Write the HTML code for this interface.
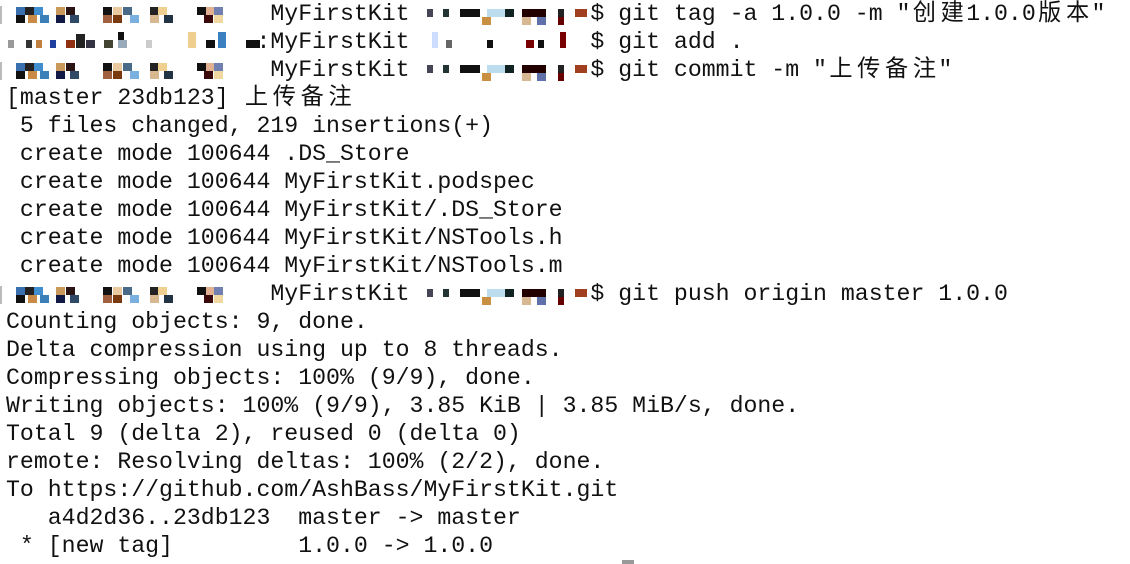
<!DOCTYPE html>
<html><head><meta charset="utf-8"><style>
body{margin:0;background:#fff;width:1130px;height:564px;overflow:hidden;position:relative}
pre{position:absolute;left:6px;top:0;margin:0;font-family:"Liberation Mono","Noto Sans CJK SC",monospace;font-size:23.2px;line-height:28px;color:#111}
pre b{font-weight:normal;display:inline-block;width:27.86px;text-align:center}
.p{position:absolute;left:0;width:600px;height:28px}
.p i{position:absolute;display:block;height:8px;width:9px}
.bar{position:absolute;left:0;width:2px;height:18px;background:#bbb}
</style></head><body>
<pre>                   MyFirstKit             $ git tag -a 1.0.0 -m "<b>创</b><b>建</b>1.0.0<b>版</b><b>本</b>"
                  :MyFirstKit             $ git add .
                   MyFirstKit             $ git commit -m "<b>上</b><b>传</b><b>备</b><b>注</b>"
[master 23db123] <b>上</b><b>传</b><b>备</b><b>注</b>
 5 files changed, 219 insertions(+)
 create mode 100644 .DS_Store
 create mode 100644 MyFirstKit.podspec
 create mode 100644 MyFirstKit/.DS_Store
 create mode 100644 MyFirstKit/NSTools.h
 create mode 100644 MyFirstKit/NSTools.m
                   MyFirstKit             $ git push origin master 1.0.0
Counting objects: 9, done.
Delta compression using up to 8 threads.
Compressing objects: 100% (9/9), done.
Writing objects: 100% (9/9), 3.85 KiB | 3.85 MiB/s, done.
Total 9 (delta 2), reused 0 (delta 0)
remote: Resolving deltas: 100% (2/2), done.
To https://github.com/AshBass/MyFirstKit.git
   a4d2d36..23db123  master -> master
 * [new tag]         1.0.0 -> 1.0.0</pre>
<div class="p" style="top:0"><div class="bar" style="top:6px"></div>
<i style="left:16px;top:7px;background:#3a6fb0"></i><i style="left:25px;top:7px;background:#222"></i><i style="left:34px;top:7px;background:#3f8fd0"></i><i style="left:16px;top:15px;background:#111"></i><i style="left:28px;top:15px;background:#c98a45"></i><i style="left:40px;top:15px;background:#3a7fb8"></i>
<i style="left:56px;top:7px;background:#c8995a"></i><i style="left:66px;top:7px;background:#2a1414"></i><i style="left:56px;top:15px;background:#111a44"></i><i style="left:70px;top:15px;background:#2e4a66"></i>
<i style="left:103px;top:7px;background:#111"></i><i style="left:113px;top:7px;background:#e8c9a0"></i><i style="left:123px;top:7px;background:#4a6a8a"></i><i style="left:103px;top:15px;background:#a06040"></i><i style="left:113px;top:15px;background:#7a3a10"></i><i style="left:130px;top:15px;background:#7ab0e0"></i>
<i style="left:150px;top:7px;background:#222"></i><i style="left:158px;top:7px;background:#f0d090"></i><i style="left:150px;top:15px;background:#d8b890"></i><i style="left:164px;top:15px;background:#223344"></i>
<i style="left:197px;top:7px;background:#111"></i><i style="left:206px;top:7px;background:#e0b090"></i><i style="left:214px;top:7px;background:#7080b0"></i><i style="left:204px;top:15px;background:#3a0a0a"></i><i style="left:214px;top:15px;background:#f0d8a0"></i>
<i style="left:427px;top:9px;background:#445;width:6px"></i><i style="left:443px;top:9px;background:#233;width:6px"></i><i style="left:460px;top:9px;width:20px;background:#111"></i><i style="left:487px;top:9px;width:20px;background:#bde"></i><i style="left:505px;top:9px;background:#122"></i><i style="left:482px;top:17px;background:#c89040"></i>
<i style="left:522px;top:9px;width:24px;background:#200"></i><i style="left:522px;top:17px;background:#d8b890"></i><i style="left:537px;top:17px;background:#6070a8"></i><i style="left:558px;top:9px;width:6px;background:#222"></i><i style="left:558px;top:17px;width:6px;background:#600"></i><i style="left:575px;top:9px;width:12px;background:#a04020"></i></div>
<div class="p" style="top:28px">
<i style="left:8px;top:12px;background:#999;width:6px"></i><i style="left:26px;top:12px;background:#333;width:6px"></i><i style="left:36px;top:12px;background:#c08040;width:6px"></i><i style="left:50px;top:12px;background:#2040a0;width:6px"></i><i style="left:66px;top:12px;background:#903010"></i><i style="left:76px;top:6px;width:9px;height:14px;background:#222"></i><i style="left:86px;top:12px;background:#334"></i>
<i style="left:104px;top:12px;background:#443"></i><i style="left:118px;top:4px;background:#111;width:6px"></i><i style="left:118px;top:12px;background:#9ab"></i><i style="left:146px;top:12px;background:#ccc;width:6px"></i><i style="left:188px;top:4px;width:8px;height:16px;background:#f0d090"></i><i style="left:206px;top:12px;background:#111"></i><i style="left:218px;top:4px;width:8px;height:16px;background:#3a80c0"></i>
<i style="left:246px;top:12px;width:14px;background:#111"></i><i style="left:432px;top:4px;width:6px;height:16px;background:#cdf"></i><i style="left:446px;top:12px;background:#666;width:6px"></i><i style="left:487px;top:12px;background:#111;width:6px"></i><i style="left:526px;top:12px;background:#700;width:8px"></i><i style="left:538px;top:12px;background:#111;width:6px"></i><i style="left:560px;top:4px;width:6px;height:16px;background:#700"></i></div>
<div class="p" style="top:56px"><div class="bar" style="top:6px"></div>
<i style="left:16px;top:7px;background:#3a6fb0"></i><i style="left:25px;top:7px;background:#222"></i><i style="left:34px;top:7px;background:#3f8fd0"></i><i style="left:16px;top:15px;background:#111"></i><i style="left:28px;top:15px;background:#c98a45"></i><i style="left:40px;top:15px;background:#3a7fb8"></i>
<i style="left:56px;top:7px;background:#c8995a"></i><i style="left:66px;top:7px;background:#2a1414"></i><i style="left:56px;top:15px;background:#111a44"></i><i style="left:70px;top:15px;background:#2e4a66"></i>
<i style="left:103px;top:7px;background:#111"></i><i style="left:113px;top:7px;background:#e8c9a0"></i><i style="left:123px;top:7px;background:#4a6a8a"></i><i style="left:103px;top:15px;background:#a06040"></i><i style="left:113px;top:15px;background:#7a3a10"></i><i style="left:130px;top:15px;background:#7ab0e0"></i>
<i style="left:150px;top:7px;background:#222"></i><i style="left:158px;top:7px;background:#f0d090"></i><i style="left:150px;top:15px;background:#d8b890"></i><i style="left:164px;top:15px;background:#223344"></i>
<i style="left:197px;top:7px;background:#111"></i><i style="left:206px;top:7px;background:#e0b090"></i><i style="left:214px;top:7px;background:#7080b0"></i><i style="left:204px;top:15px;background:#3a0a0a"></i><i style="left:214px;top:15px;background:#f0d8a0"></i>
<i style="left:427px;top:9px;background:#445;width:6px"></i><i style="left:443px;top:9px;background:#233;width:6px"></i><i style="left:460px;top:9px;width:20px;background:#111"></i><i style="left:487px;top:9px;width:20px;background:#bde"></i><i style="left:505px;top:9px;background:#122"></i><i style="left:482px;top:17px;background:#c89040"></i>
<i style="left:522px;top:9px;width:24px;background:#200"></i><i style="left:522px;top:17px;background:#d8b890"></i><i style="left:537px;top:17px;background:#6070a8"></i><i style="left:558px;top:9px;width:6px;background:#222"></i><i style="left:558px;top:17px;width:6px;background:#600"></i><i style="left:575px;top:9px;width:12px;background:#a04020"></i></div>
<div class="p" style="top:280px"><div class="bar" style="top:6px"></div>
<i style="left:16px;top:7px;background:#3a6fb0"></i><i style="left:25px;top:7px;background:#222"></i><i style="left:34px;top:7px;background:#3f8fd0"></i><i style="left:16px;top:15px;background:#111"></i><i style="left:28px;top:15px;background:#c98a45"></i><i style="left:40px;top:15px;background:#3a7fb8"></i>
<i style="left:56px;top:7px;background:#c8995a"></i><i style="left:66px;top:7px;background:#2a1414"></i><i style="left:56px;top:15px;background:#111a44"></i><i style="left:70px;top:15px;background:#2e4a66"></i>
<i style="left:103px;top:7px;background:#111"></i><i style="left:113px;top:7px;background:#e8c9a0"></i><i style="left:123px;top:7px;background:#4a6a8a"></i><i style="left:103px;top:15px;background:#a06040"></i><i style="left:113px;top:15px;background:#7a3a10"></i><i style="left:130px;top:15px;background:#7ab0e0"></i>
<i style="left:150px;top:7px;background:#222"></i><i style="left:158px;top:7px;background:#f0d090"></i><i style="left:150px;top:15px;background:#d8b890"></i><i style="left:164px;top:15px;background:#223344"></i>
<i style="left:197px;top:7px;background:#111"></i><i style="left:206px;top:7px;background:#e0b090"></i><i style="left:214px;top:7px;background:#7080b0"></i><i style="left:204px;top:15px;background:#3a0a0a"></i><i style="left:214px;top:15px;background:#f0d8a0"></i>
<i style="left:427px;top:9px;background:#445;width:6px"></i><i style="left:443px;top:9px;background:#233;width:6px"></i><i style="left:460px;top:9px;width:20px;background:#111"></i><i style="left:487px;top:9px;width:20px;background:#bde"></i><i style="left:505px;top:9px;background:#122"></i><i style="left:482px;top:17px;background:#c89040"></i>
<i style="left:522px;top:9px;width:24px;background:#200"></i><i style="left:522px;top:17px;background:#d8b890"></i><i style="left:537px;top:17px;background:#6070a8"></i><i style="left:558px;top:9px;width:6px;background:#222"></i><i style="left:558px;top:17px;width:6px;background:#600"></i><i style="left:575px;top:9px;width:12px;background:#a04020"></i></div>
<div style="position:absolute;left:622px;top:560px;width:12px;height:4px;background:#999"></div>
</body></html>
